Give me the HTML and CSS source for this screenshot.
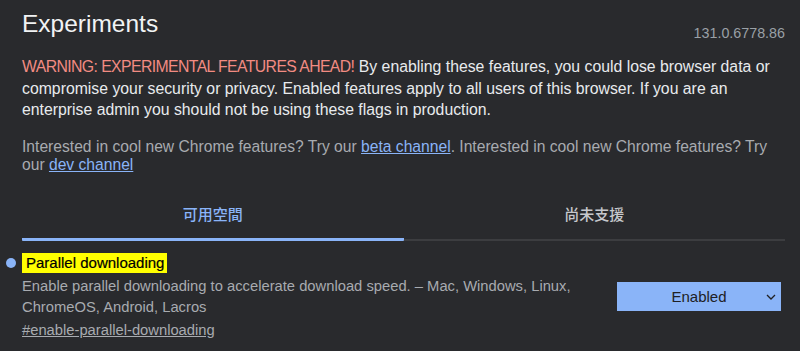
FILE: index.html
```html
<!DOCTYPE html>
<html lang="en">
<head>
<meta charset="utf-8">
<link rel="stylesheet" href="styles.css">
</head>
<body>
<div class="page">
  <header class="header">
    <h1 class="title">Experiments</h1>
    <span class="version">131.0.6778.86</span>
  </header>
  <p class="warning"><span class="warn-label">WARNING: EXPERIMENTAL FEATURES AHEAD!</span> By enabling these features, you could lose browser data or compromise your security or privacy. Enabled features apply to all users of this browser. If you are an enterprise admin you should not be using these flags in production.</p>
  <p class="channels">Interested in cool new Chrome features? Try our <a class="link" href="#">beta channel</a>. Interested in cool new Chrome features? Try our <a class="link" href="#">dev channel</a></p>
  <div class="tabs">
    <div class="tab tab-active">可用空間</div>
    <div class="tab">尚未支援</div>
  </div>
  <div class="flag">
    <div class="flag-info">
      <div class="flag-title-row">
        <span class="dot"></span>
        <span class="flag-title">Parallel downloading</span>
      </div>
      <p class="flag-desc">Enable parallel downloading to accelerate download speed. – Mac, Windows, Linux, ChromeOS, Android, Lacros</p>
      <a class="flag-anchor" href="#">#enable-parallel-downloading</a>
    </div>
    <div class="select">
      <span class="select-label">Enabled</span>
      <svg class="chevron" width="10" height="6" viewBox="0 0 10 6"><path d="M1 1l4 4 4-4" fill="none" stroke="#202124" stroke-width="1.3"/></svg>
    </div>
  </div>
</div>
</body>
</html>
```
FILE: styles.css
```css
html, body {
  margin: 0;
  padding: 0;
  background: #292a2d;
}
body {
  font-family: "Liberation Sans", Arial, "Noto Sans CJK TC", sans-serif;
  color: #e8eaed;
}
.page {
  padding: 8px 15px 0 22px;
}
.header {
  display: flex;
  justify-content: space-between;
  align-items: flex-end;
}
.title {
  margin: 0;
  font-size: 24.5px;
  font-weight: 400;
  line-height: 32px;
  color: #f1f3f4;
}
.version {
  font-size: 14.3px;
  color: #9aa0a6;
  margin-bottom: -1px;
}
.warning {
  margin: 16px 0 0;
  font-size: 15.8px;
  line-height: 21.5px;
  color: #e8eaed;
  max-width: 763px;
}
.warn-label {
  color: #f28b82;
  letter-spacing: -0.6px;
}
.channels {
  margin: 17px 0 0;
  font-size: 15.65px;
  line-height: 18.5px;
  color: #a8abb0;
}
.link {
  color: #8ab4f8;
  text-decoration: underline;
}
.tabs {
  display: grid;
  grid-template-columns: 1fr 1fr;
  margin-top: 28px;
  border-bottom: 2px solid #3c3d40;
}
.tab {
  text-align: center;
  font-family: "Noto Sans CJK TC", sans-serif;
  font-size: 15px;
  font-weight: 500;
  line-height: 20px;
  padding-top: 1px;
  padding-bottom: 14px;
  color: #c6c8cc;
  margin-bottom: -2px;
}
.tab-active {
  color: #8ab4f8;
  border-bottom: 3px solid #8ab4f8;
  border-radius: 1px;
}
.flag {
  display: flex;
  justify-content: space-between;
  align-items: center;
  margin-top: 12px;
}
.flag-info {
  display: flex;
  flex-direction: column;
  align-items: flex-start;
}
.flag-title-row {
  display: flex;
  align-items: center;
  gap: 6px;
  margin-left: -16px;
}
.dot {
  width: 10px;
  height: 10px;
  border-radius: 50%;
  background: #8ab4f8;
}
.flag-title {
  background: #ffff00;
  color: #000;
  font-size: 15px;
  font-weight: 400;
  -webkit-text-stroke: 0.2px #000;
  padding: 1px 3px 1px 4px;
  line-height: 18px;
}
.flag-desc {
  margin: 3px 0 0;
  font-size: 14.75px;
  line-height: 21px;
  color: #a8abb0;
  max-width: 570px;
}
.flag-anchor {
  margin-top: 2px;
  font-size: 14.75px;
  line-height: 21px;
  color: #a8abb0;
  text-decoration: underline;
}
.select {
  display: flex;
  align-items: center;
  justify-content: center;
  position: relative;
  width: 164px;
  height: 29px;
  background: #8ab4f8;
  color: #202124;
  font-size: 15px;
  margin-right: 4px;
  margin-top: -1px;
}
.chevron {
  position: absolute;
  right: 5px;
  top: 12px;
}
```
